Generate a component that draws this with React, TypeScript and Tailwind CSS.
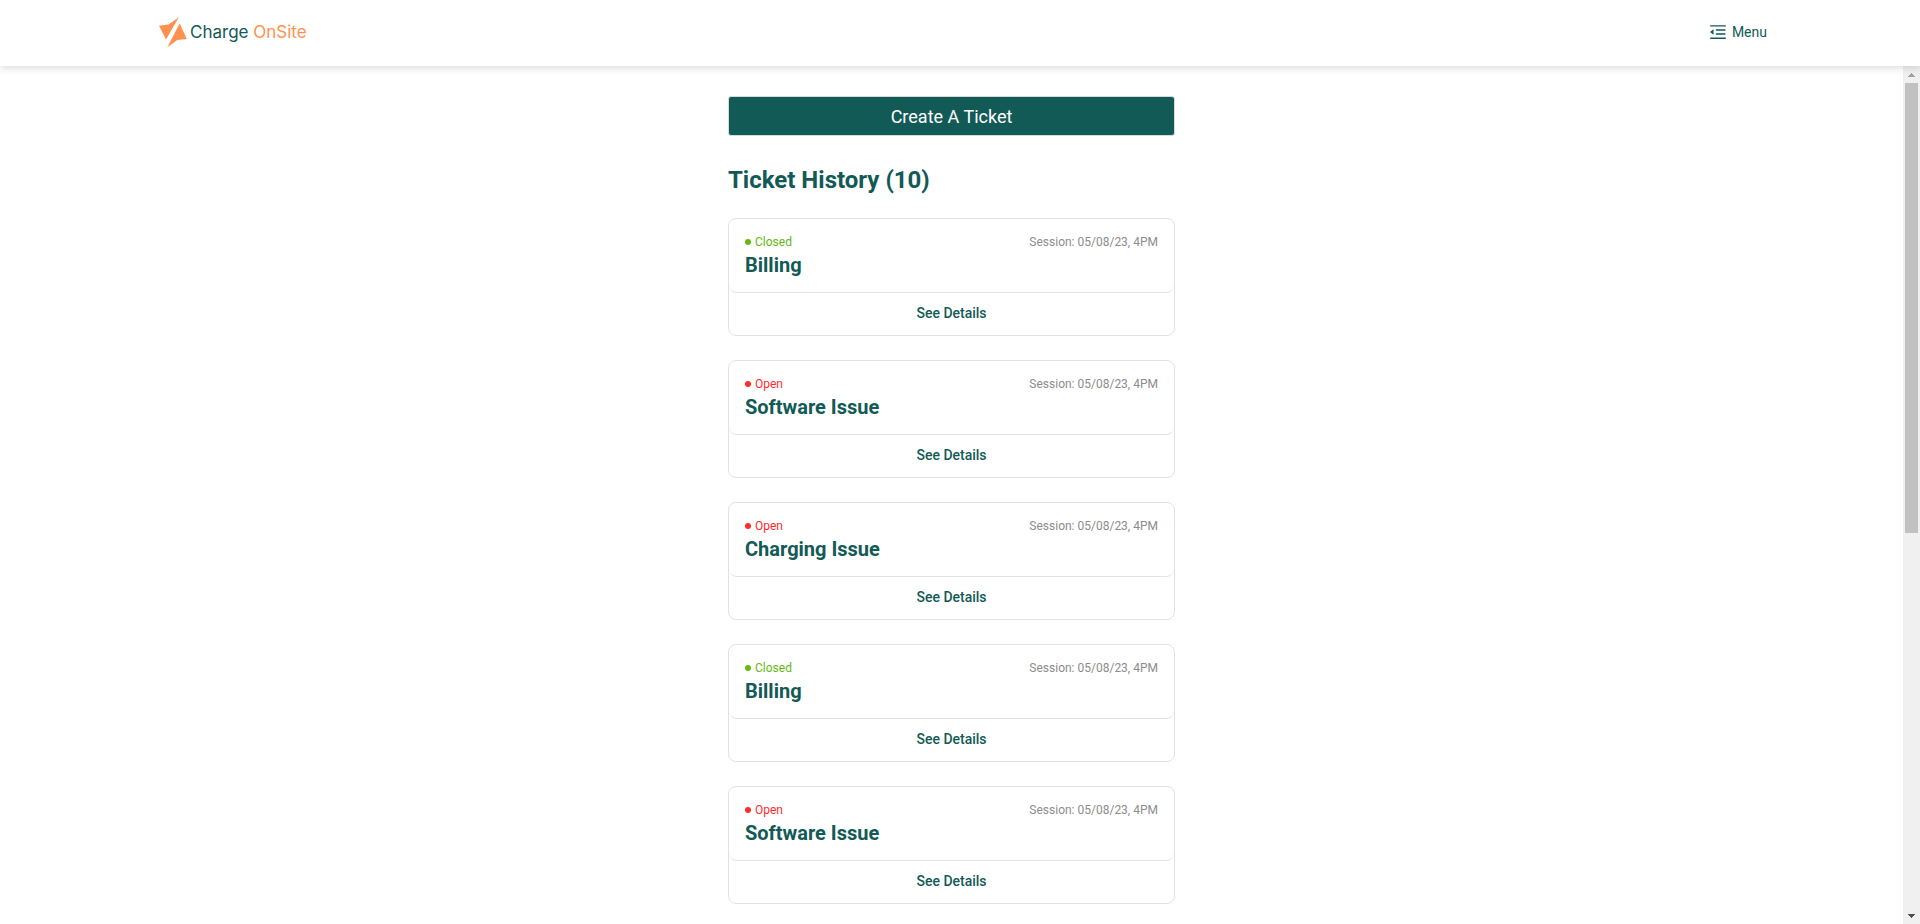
import { useEffect, useRef, useState } from "react";
import { AiOutlineMenuFold } from "react-icons/ai";

type Status = "Open" | "Closed";

interface Ticket {
  id: number;
  title: string;
  status: Status;
  session: string;
}

const SESSION = "05/08/23, 4PM";

const tickets: Ticket[] = [
  { id: 1, title: "Billing", status: "Closed", session: SESSION },
  { id: 2, title: "Software Issue", status: "Open", session: SESSION },
  { id: 3, title: "Charging Issue", status: "Open", session: SESSION },
  { id: 4, title: "Billing", status: "Closed", session: SESSION },
  { id: 5, title: "Software Issue", status: "Open", session: SESSION },
  { id: 6, title: "Charging Issue", status: "Open", session: SESSION },
  { id: 7, title: "Billing", status: "Closed", session: SESSION },
  { id: 8, title: "Software Issue", status: "Open", session: SESSION },
  { id: 9, title: "Charging Issue", status: "Open", session: SESSION },
  { id: 10, title: "Billing", status: "Closed", session: SESSION },
];

function Logo() {
  return (
    <a href="#" className="flex items-center gap-[3px] font-[Inter,sans-serif] text-[17px] leading-6">
      <svg viewBox="0 0 28 31" className="h-[31px] w-7" fill="#ff9150" aria-hidden="true">
        <path d="M0 8.7 9.5 7.6 19.8 0.3 7 22.6Z" />
        <path d="M20.7 6.3 27.7 22 18.3 23 8.3 30.3Z" />
      </svg>
      <span className="text-[#125a56]">
        Charge <span className="text-[#ff9150]">OnSite</span>
      </span>
    </a>
  );
}

function Header() {
  return (
    <header className="relative z-10 flex h-[66px] shrink-0 items-center justify-between bg-white pr-[153px] pb-[2px] pl-[159px] shadow-[0_2px_8px_rgba(0,0,0,0.15)]">
      <Logo />
      <button type="button" className="flex items-center gap-1 text-sm text-[#125a56]">
        <AiOutlineMenuFold className="size-5" aria-hidden="true" />
        Menu
      </button>
    </header>
  );
}

function TicketCard({ ticket }: { ticket: Ticket }) {
  const closed = ticket.status === "Closed";
  return (
    <li className="rounded-lg border border-[#e2e2e2] bg-white">
      <div className="rounded-lg border-b border-[#e2e2e2] px-4 pt-[14px] pb-[13px]">
        <div className="flex items-center justify-between text-xs leading-[18px]">
          <span className={closed ? "flex items-center gap-1 text-[#64b90e]" : "flex items-center gap-1 text-[#ff2b2b]"}>
            <span className="size-[6px] rounded-full bg-current" />
            {ticket.status}
          </span>
          <span className="text-[#8c8c8c]">Session: {ticket.session}</span>
        </div>
        <h2 className="text-xl leading-7 font-bold text-[#125a56]">{ticket.title}</h2>
      </div>
      <button type="button" className="block w-full pt-[9px] pb-[11px] text-center text-sm leading-[22px] font-medium text-[#125a56]">
        See Details
      </button>
    </li>
  );
}

export default function App() {
  const area = useRef<HTMLElement>(null);
  const [thumb, setThumb] = useState({ top: 0, height: 0 });

  const measure = () => {
    const el = area.current;
    if (!el) return;
    setThumb({
      top: (el.scrollTop / el.scrollHeight) * 100,
      height: (el.clientHeight / el.scrollHeight) * 100,
    });
  };

  useEffect(() => {
    measure();
    window.addEventListener("resize", measure);
    return () => window.removeEventListener("resize", measure);
  }, []);

  const scrollBy = (top: number) => area.current?.scrollBy({ top });

  return (
    <div className="flex h-screen flex-col overflow-hidden bg-white font-[Roboto,sans-serif]">
      <Header />
      <div className="flex min-h-0 flex-1">
        <main
          ref={area}
          onScroll={measure}
          className="min-w-0 flex-1 overflow-y-auto px-4 pt-[30px] pb-6 [scrollbar-width:none]"
        >
          <div className="mx-auto flex max-w-[447px] flex-col">
            <button
              type="button"
              className="rounded-[3px] border border-[#d9d9d9] bg-[#125a56] pt-[6px] pb-1 text-lg leading-7 text-white"
            >
              Create A Ticket
            </button>
            <h1 className="mt-7 mb-[22px] text-2xl leading-8 font-bold text-[#125a56]">
              Ticket History ({tickets.length})
            </h1>
            <ul className="flex flex-col gap-6">
              {tickets.map((ticket) => (
                <TicketCard key={ticket.id} ticket={ticket} />
              ))}
            </ul>
          </div>
        </main>
        <div className="flex w-[17px] shrink-0 flex-col bg-[#f0f0f0]">
          <button type="button" aria-label="Scroll up" onClick={() => scrollBy(-40)} className="flex h-[17px] items-center justify-center">
            <svg viewBox="0 0 7 4" className="h-1 w-[7px]" fill="#a3a3a3" shapeRendering="crispEdges" aria-hidden="true">
              <path d="M3 0h1v1h1v1h1v1h1v1H0V3h1V2h1V1h1z" />
            </svg>
          </button>
          <div className="flex-1 px-[2px]">
            <div className="h-full">
              <div style={{ height: `${thumb.top}%` }} />
              <div className="bg-[#c1c1c1]" style={{ height: `${thumb.height}%` }} />
            </div>
          </div>
          <button type="button" aria-label="Scroll down" onClick={() => scrollBy(40)} className="flex h-[17px] items-center justify-center">
            <svg viewBox="0 0 7 4" className="h-1 w-[7px]" fill="#505050" shapeRendering="crispEdges" aria-hidden="true">
              <path d="M0 0h7v1H6v1H5v1H4v1H3V3H2V2H1V1H0z" />
            </svg>
          </button>
        </div>
      </div>
    </div>
  );
}
